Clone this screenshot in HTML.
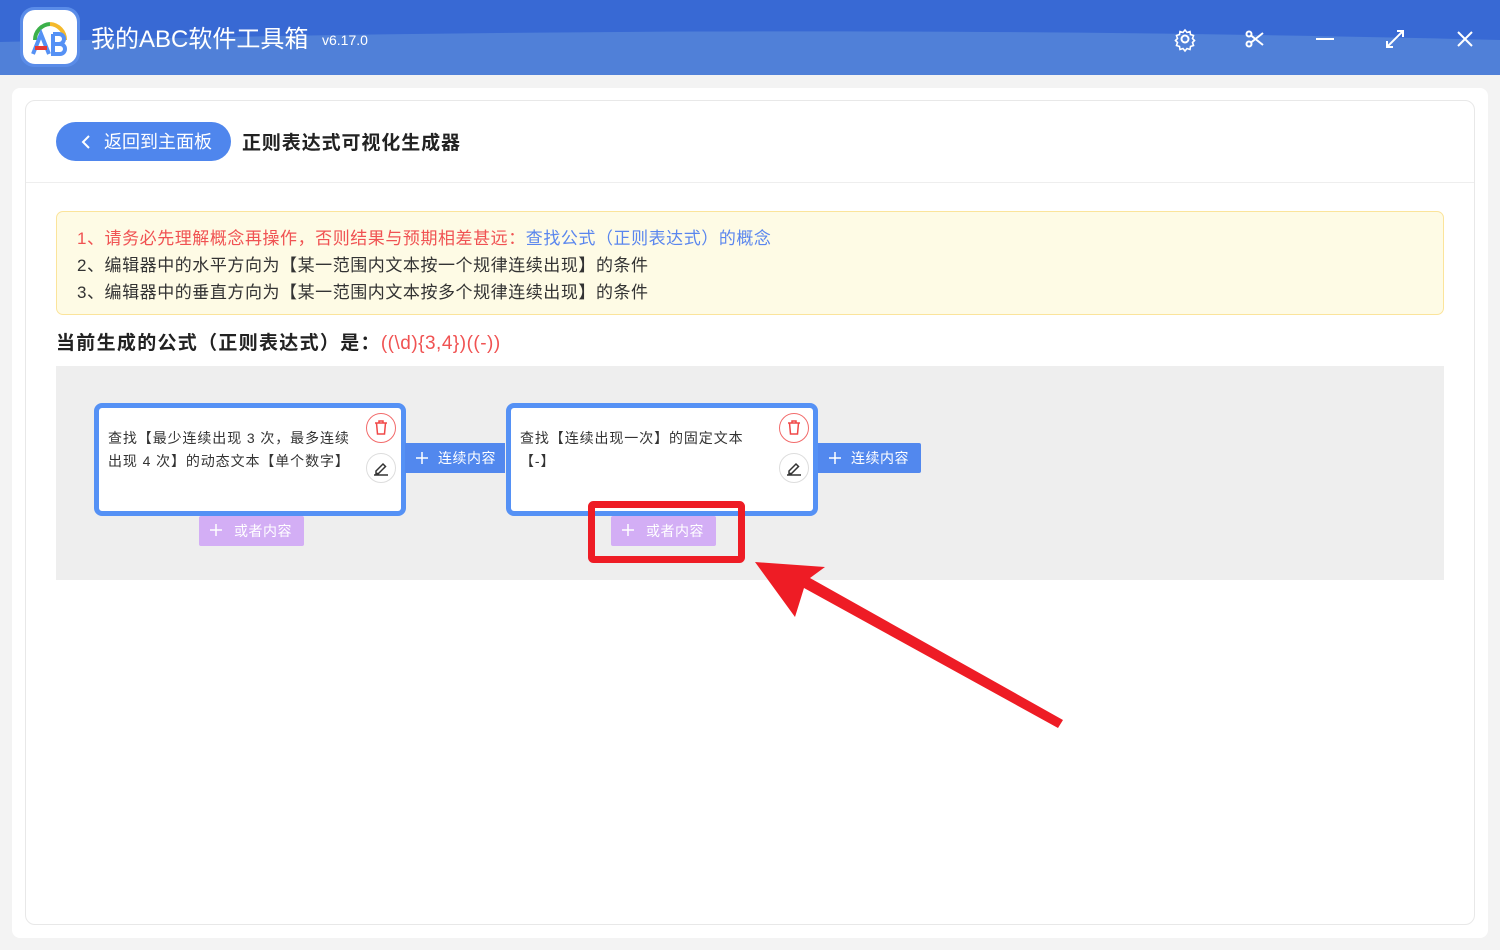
<!DOCTYPE html>
<html><head><meta charset="utf-8">
<style>
*{box-sizing:border-box;margin:0;padding:0}
body{width:1500px;height:950px;overflow:hidden;background:#f3f3f3;font-family:"Liberation Sans","Noto Sans CJK SC",sans-serif;position:relative}
.hdr{position:absolute;left:0;top:0;width:1500px;height:75px;background:#3869d4;overflow:hidden}
.abs{position:absolute}
.main{position:absolute;left:12px;top:88px;width:1476px;height:850px;background:#fff;border-radius:8px}
.inner{position:absolute;left:25px;top:100px;width:1450px;height:825px;border:1px solid #e8e8e8;border-radius:10px;background:#fff}
.card{position:absolute;width:312px;height:113px;border:5px solid #5591f5;border-radius:8px;background:#fff;font-size:14px;color:#333;line-height:23px;padding:19px 0 0 9px;letter-spacing:0.9px}
.lx{position:absolute;height:30px;background:#5288ee;color:#fff;font-size:14px;line-height:30px;letter-spacing:0.5px}
.or{position:absolute;width:105px;height:30px;background:#d3aef5;color:#fff;font-size:14px;line-height:30px;border-radius:2px;letter-spacing:0.5px}
</style></head><body>
<div class="hdr">
<svg class="abs" style="left:0;top:0" width="1500" height="75"><path d="M0 42 C400 32 900 25 1500 40 L1500 75 L0 75Z" fill="#5080d8"/></svg>
<div class="abs" style="left:20px;top:7px;width:60px;height:60px;border-radius:14px;background:#5a8ce8"></div>
<div class="abs" style="left:23px;top:10px;width:54px;height:54px;border-radius:12px;background:#fff"></div>
<svg class="abs" style="left:23px;top:10px" width="54" height="54">
<path d="M12 30 A16 16 0 0 1 27 14" stroke="#3bb04a" stroke-width="4" fill="none"/>
<path d="M27 14 A16 16 0 0 1 42 30" stroke="#f4b92b" stroke-width="4" fill="none"/>
<path d="M10 44 L18 24 L26 44" stroke="#5591f5" stroke-width="4" fill="none"/>
<path d="M12 38 L24 38" stroke="#e53935" stroke-width="4"/>
<path d="M30 24 L30 44 L37 44 A5 5 0 0 0 37 34 L30 34 M30 24 L36 24 A5 5 0 0 1 36 34" stroke="#5591f5" stroke-width="4" fill="none"/>
</svg>
<div class="abs" style="left:91px;top:23px;color:#fff;font-size:24px;line-height:34px">我的ABC软件工具箱</div>
<div class="abs" style="left:322px;top:32px;color:#fff;font-size:14px">v6.17.0</div>
<svg class="abs" style="left:1170px;top:25px" width="310" height="30" stroke="#fff" stroke-width="2" fill="none">
<circle cx="15" cy="14" r="3.5"/><path d="M15 5l2 2.5 3-1 .5 3 3 1-1 3 2 2-2 2 1 3-3 1-.5 3-3-1-2 2.5-2-2.5-3 1-.5-3-3-1 1-3-2-2 2-2-1-3 3-1 .5-3 3 1z" stroke-width="1.6"/>
<circle cx="79" cy="19" r="2.5"/><circle cx="79" cy="9" r="2.5"/><path d="M81 10.5 L93 20 M81 17.5 L93 8"/>
<path d="M146 14 L164 14"/>
<path d="M217 22 L233 6 M227 6 L233 6 L233 12 M217 16 L217 22 L223 22"/>
<path d="M288 7 L302 21 M302 7 L288 21"/>
</svg>
</div>
<div class="main"></div>
<div class="inner">
<div class="abs" style="left:0;top:81px;width:1448px;height:1px;background:#eee"></div>
</div>
<div class="abs" style="left:56px;top:122px;width:175px;height:39px;border-radius:20px;background:#4f86ed;color:#fff;font-size:18px;line-height:41px;padding-left:48px">返回到主面板</div>
<svg class="abs" style="left:80px;top:134px" width="12" height="16"><path d="M9 2 L3 8 L9 14" stroke="#fff" stroke-width="2" fill="none"/></svg>
<div class="abs" style="left:242px;top:131px;font-size:19px;font-weight:bold;color:#222;line-height:26px;letter-spacing:0.9px">正则表达式可视化生成器</div>
<div class="abs" style="left:56px;top:211px;width:1388px;height:104px;background:#fefbe5;border:1px solid #fbe49b;border-radius:7px;font-size:17px;line-height:27px;padding:13px 0 0 20px;color:#333;letter-spacing:0.55px">
<div><span style="color:#f05252">1、请务必先理解概念再操作，否则结果与预期相差甚远：</span><span style="color:#5a86ee">查找公式（正则表达式）的概念</span></div>
<div>2、编辑器中的水平方向为【某一范围内文本按一个规律连续出现】的条件</div>
<div>3、编辑器中的垂直方向为【某一范围内文本按多个规律连续出现】的条件</div>
</div>
<div class="abs" style="left:56px;top:330px;font-size:19px;line-height:27px;color:#222"><b style="letter-spacing:1.3px">当前生成的公式（正则表达式）是：</b><span style="color:#f05252;letter-spacing:0.5px">((\d){3,4})((-))</span></div>
<div class="abs" style="left:56px;top:366px;width:1388px;height:214px;background:#eee"></div>

<div class="card" style="left:94px;top:403px">查找【最少连续出现 3 次，最多连续<br>出现 4 次】的动态文本【单个数字】</div>
<div class="card" style="left:506px;top:403px">查找【连续出现一次】的固定文本<br>【-】</div>

<div class="lx" style="left:405px;top:443px;width:100px;padding-left:33px">连续内容</div>
<div class="lx" style="left:818px;top:443px;width:103px;padding-left:33px;border-radius:0 2px 2px 0">连续内容</div>
<div class="or" style="left:199px;top:516px;padding-left:35px">或者内容</div>
<div class="or" style="left:611px;top:516px;padding-left:35px">或者内容</div>
<svg class="abs" style="left:0;top:0;pointer-events:none" width="1500" height="950">
<g stroke="#fff" stroke-width="1.5"><path d="M416 458h12M422 452v12M829 458h12M835 452v12M210 530h12M216 524v12M622 530h12M628 524v12"/></g>
<g><circle cx="381" cy="428" r="14.5" fill="#fff" stroke="#f26b6b"/><circle cx="381" cy="468" r="14.5" fill="#fff" stroke="#ddd"/>
<circle cx="794" cy="428" r="14.5" fill="#fff" stroke="#f26b6b"/><circle cx="794" cy="468" r="14.5" fill="#fff" stroke="#ddd"/></g>
<g stroke="#f04848" stroke-width="1.5" fill="none"><path d="M375 423h12M379 423v-2h4v2M376.5 423l1 11h7l1-11"/><path d="M788 423h12M792 423v-2h4v2M789.5 423l1 11h7l1-11"/></g>
<g stroke="#333" stroke-width="1.5" fill="none"><path d="M374 475h14M376 471l7-7 2.5 2.5-7 7h-2.5z"/><path d="M787 475h14M789 471l7-7 2.5 2.5-7 7h-2.5z"/></g>
<rect x="591.5" y="504.5" width="150" height="55" rx="2" fill="none" stroke="#ee1c25" stroke-width="7"/>
<path d="M755 562 L825 567 L810 578 L1063 720 L1058 728 L804 588 L795 617 Z" fill="#ee1c25"/>
</svg>
</body></html>
